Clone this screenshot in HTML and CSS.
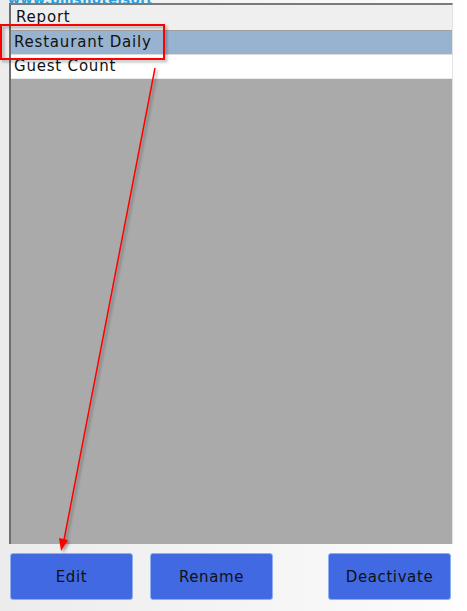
FILE: index.html
```html
<!DOCTYPE html>
<html>
<head>
<meta charset="utf-8">
<link rel="stylesheet" href="styles.css">
</head>
<body>
<div class="page">
  <div class="site"><span>www.bmshotelsoft</span></div>
  <div class="listbox">
    <div class="row header">Report</div>
    <div class="row selected">Restaurant Daily</div>
    <div class="row">Guest Count</div>
    <div class="empty"></div>
  </div>
  <div class="buttons">
    <button class="btn">Edit</button>
    <button class="btn">Rename</button>
    <button class="btn push">Deactivate</button>
  </div>
  <svg class="annot" width="467" height="611" viewBox="0 0 467 611">
    <defs>
      <filter id="sh" x="-10%" y="-10%" width="130%" height="130%">
        <feDropShadow dx="2" dy="2" stdDeviation="1.5" flood-color="#000" flood-opacity="0.35"/>
      </filter>
    </defs>
    <rect x="1" y="25" width="163" height="34" fill="none" stroke="#f00" stroke-width="2" filter="url(#sh)"/>
    <g filter="url(#sh)">
      <line x1="155" y1="68" x2="64" y2="540" stroke="#f00" stroke-width="1.5"/>
      <polygon points="61,551 59,538 68,540" fill="#f00"/>
    </g>
  </svg>
</div>
</body>
</html>
```
FILE: styles.css
```css
html, body {
  margin: 0;
  padding: 0;
}
body {
  width: 467px;
  height: 611px;
  overflow: hidden;
  background: linear-gradient(90deg, #ececec 0px, #f3f3f3 200px, #fbfbfb 440px, #ffffff 467px);
  font-family: "DejaVu Sans", Verdana, sans-serif;
}
.page {
  position: relative;
  width: 467px;
  height: 611px;
  display: flex;
  flex-direction: column;
}
.site {
  height: 3px;
  overflow: hidden;
  margin-left: 8px;
  font-size: 13px;
  line-height: 3px;
  color: #2a9fe0;
  font-weight: bold;
  letter-spacing: 0.5px;
}
.site span {
  display: block;
  margin-top: -4px;
  line-height: 8px;
}
.listbox {
  margin-left: 9px;
  width: 441px;
  height: 539px;
  border-top: 2px solid #7a7a7a;
  border-left: 2px solid #6e6e6e;
  border-right: 1px solid #e2e2e2;
  display: flex;
  flex-direction: column;
  background: #aaaaaa;
}
.row {
  height: 23px;
  line-height: 23px;
  padding-left: 3px;
  font-size: 15px;
  letter-spacing: 0.8px;
  color: #111;
  background: #ffffff;
  white-space: nowrap;
  border-bottom: 1px solid #ebebeb;
}
.row.header {
  height: 25px;
  line-height: 25px;
  background: #efefef;
  padding-left: 5px;
  border-bottom: 1px solid #a0a0a0;
}
.row.selected {
  background: #97b3d0;
  border-bottom: 1px solid #dcdcdc;
}
.empty {
  flex: 1;
  background: #aaaaaa;
}
.buttons {
  display: flex;
  gap: 17px;
  margin-top: 9px;
  margin-left: 10px;
  width: 441px;
}
.btn {
  width: 123px;
  height: 47px;
  background: #4169e1;
  border: 1px solid #8fb0f0;
  border-radius: 3px;
  color: #111;
  font-family: "DejaVu Sans", Verdana, sans-serif;
  font-size: 15px;
  letter-spacing: 0.6px;
  padding: 0;
}
.btn.push {
  margin-left: auto;
}
.annot {
  position: absolute;
  left: 0;
  top: 0;
  pointer-events: none;
}
```
